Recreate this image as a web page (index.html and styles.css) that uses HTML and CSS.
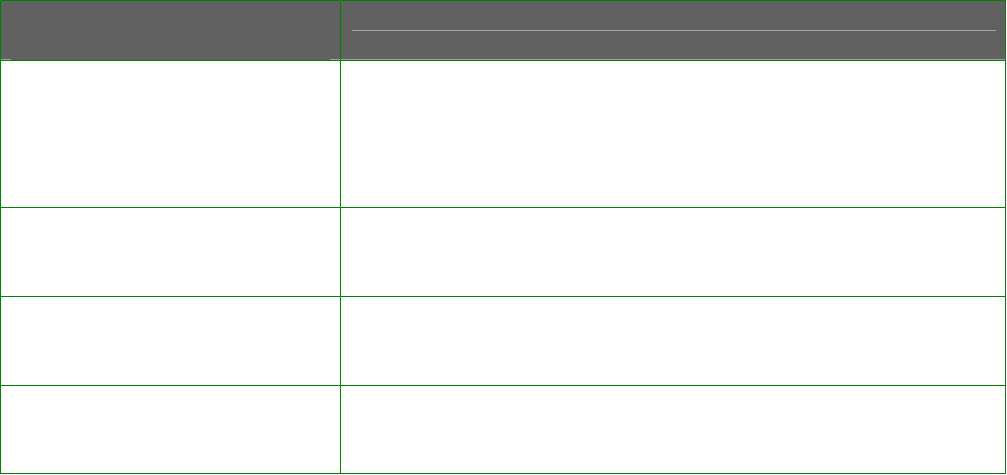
FILE: index.html
```html
<!DOCTYPE html>
<html>
<head>
<meta charset="utf-8">
<link rel="stylesheet" href="styles.css">
</head>
<body>
<div class="table">
  <div class="head head-a">
    <div class="ticks"><span class="tick"></span><span class="tick"></span></div>
  </div>
  <div class="head head-b">
    <div class="rule"></div>
    <div class="base"></div>
  </div>
  <div class="cell"></div><div class="cell"></div>
  <div class="cell"></div><div class="cell"></div>
  <div class="cell"></div><div class="cell"></div>
  <div class="cell"></div><div class="cell"></div>
</div>
</body>
</html>
```

FILE: styles.css
```css
html, body {
  margin: 0;
  padding: 0;
  background: #ffffff;
  font-family: "Liberation Sans", Arial, sans-serif;
}
.table {
  display: grid;
  grid-template-columns: 339px 664px;
  grid-template-rows: 59px 146px 88px 88px 87px;
  gap: 1px;
  padding: 1px;
  width: 1006px;
  box-sizing: border-box;
  background: #008000;
}
.cell {
  background: #ffffff;
}
.head {
  background: #616161;
  display: flex;
  flex-direction: column;
}
.head-a {
  justify-content: flex-end;
}
.ticks {
  display: flex;
  justify-content: space-between;
}
.tick {
  display: block;
  width: 10px;
  height: 1px;
  background: #a3a3a3;
}
.head-b .rule {
  height: 1px;
  margin: 29px 9px 0 11px;
  background: #a3a3a3;
}
.head-b .base {
  margin-top: auto;
  height: 1px;
  background: #a3a3a3;
}
```
